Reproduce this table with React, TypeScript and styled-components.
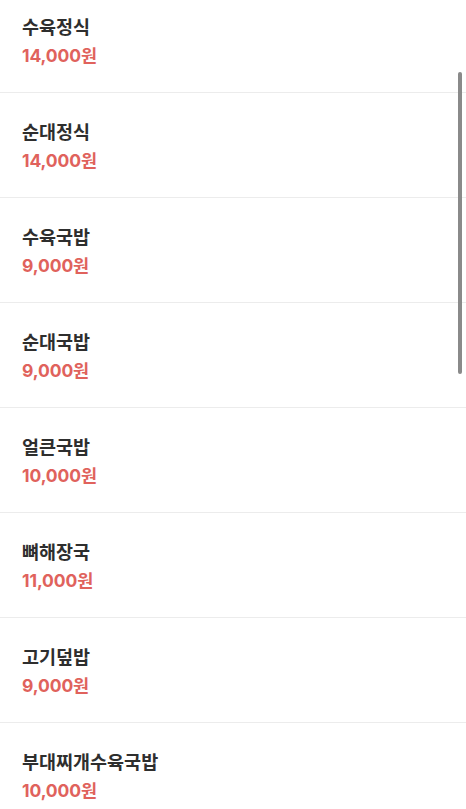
import React, { useEffect, useRef } from "react";
import styled, { createGlobalStyle } from "styled-components";

const GlobalStyle = createGlobalStyle`
  html, body {
    margin: 0;
    padding: 0;
    background: #fff;
    font-family: "Noto Sans CJK KR", "Noto Sans", sans-serif;
  }
`;

const Screen = styled.div`
  position: relative;
  height: 100vh;
  overflow: hidden;
`;

const MenuList = styled.ul`
  list-style: none;
  margin: 0;
  padding: 0;
  height: 100%;
  overflow-y: scroll;
  scrollbar-width: none;
  &::-webkit-scrollbar {
    display: none;
  }
`;

const MenuItem = styled.li`
  height: 105px;
  box-sizing: border-box;
  padding: 24px 22px 0;
  border-bottom: 1px solid #ececec;
  display: flex;
  flex-direction: column;
`;

const MenuName = styled.div`
  font-size: 18.5px;
  font-weight: 700;
  color: #2e2e2e;
  line-height: 28px;
`;

const MenuPrice = styled.div`
  margin-top: 2px;
  font-family: Inter, "Noto Sans CJK KR", sans-serif;
  font-size: 17.5px;
  font-weight: 700;
  color: #e0625c;
  line-height: 28px;
  letter-spacing: -0.1px;
`;

const ScrollThumb = styled.div`
  position: absolute;
  right: 4px;
  top: 72px;
  width: 4px;
  height: 302px;
  border-radius: 2px;
  background: #8a8a8a;
`;

const menus = [
  { name: "수육정식", price: 14000 },
  { name: "순대정식", price: 14000 },
  { name: "수육국밥", price: 9000 },
  { name: "순대국밥", price: 9000 },
  { name: "얼큰국밥", price: 10000 },
  { name: "뼈해장국", price: 11000 },
  { name: "고기덮밥", price: 9000 },
  { name: "부대찌개수육국밥", price: 10000 },
];

export default function App() {
  const listRef = useRef<HTMLUListElement>(null);

  useEffect(() => {
    if (listRef.current) listRef.current.scrollTop = 12;
  }, []);

  return (
    <>
      <GlobalStyle />
      <Screen>
        <MenuList ref={listRef}>
          {menus.map((m) => (
            <MenuItem key={m.name}>
              <MenuName>{m.name}</MenuName>
              <MenuPrice>{m.price.toLocaleString("ko-KR")}원</MenuPrice>
            </MenuItem>
          ))}
        </MenuList>
        <ScrollThumb />
      </Screen>
    </>
  );
}
